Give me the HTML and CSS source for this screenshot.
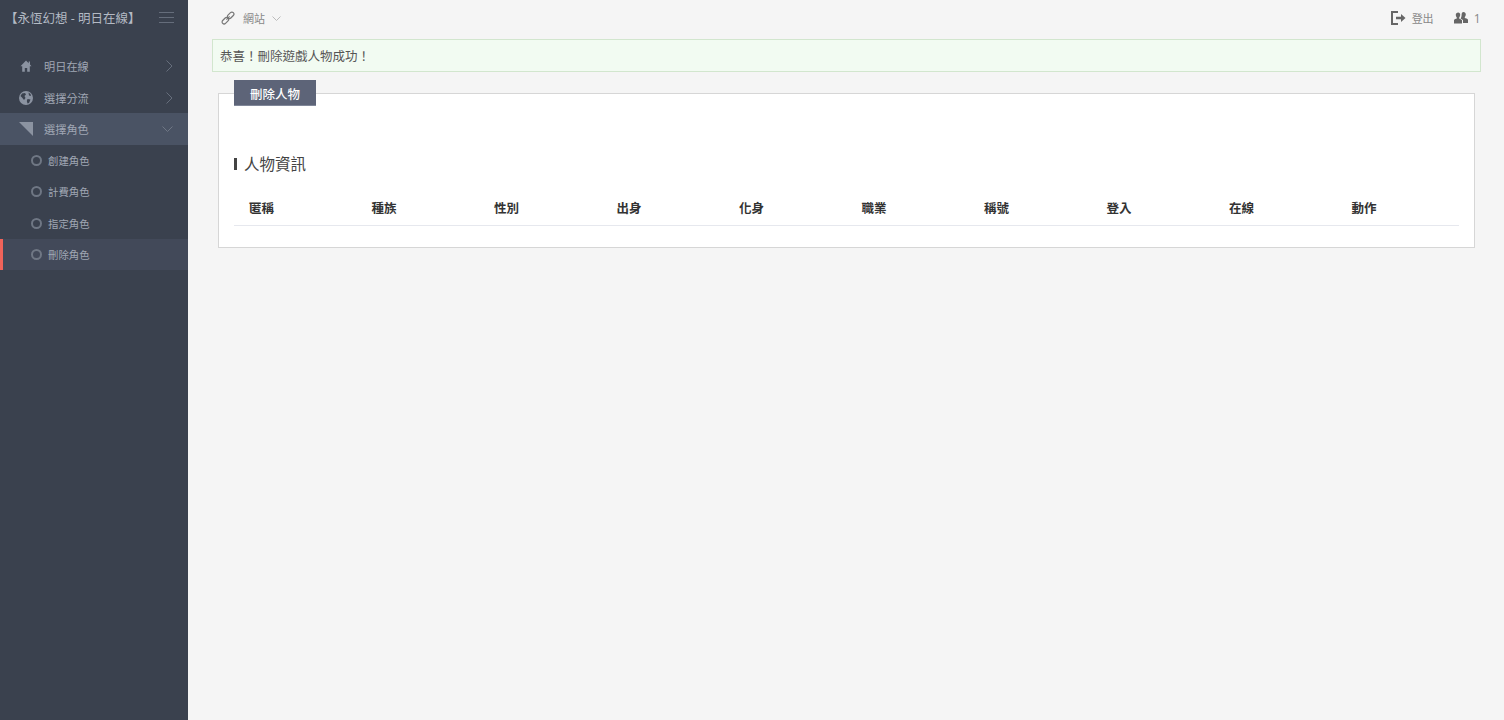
FILE: index.html
```html
<!DOCTYPE html>
<html lang="zh-Hant">
<head>
    <meta charset="UTF-8">
    <meta name="viewport" content="width=device-width, initial-scale=1.0">
    <title>刪除人物</title>
    <link rel="stylesheet" href="styles.css">
</head>
<body>
    <aside class="sidebar">
        <div class="logo">
            <span class="logo-text">【永恆幻想 - 明日在線】</span>
            <svg class="burger" width="15" height="11" viewBox="0 0 15 11"><path d="M0 .5h15M0 5.500h15M0 10.500h15" stroke="#656d7b" fill="none"/></svg>
        </div>
        <nav class="menu">
            <a class="menu-item">
                <svg class="menu-icon" width="14" height="14" viewBox="0 0 14 14"><path d="M7 1.500 1.500 7.200h1.700V12.800h2.600V9h2.400v3.800h2.600V7.200h1.700L11 5.600V2.400H9.700v1.900z" fill="#8b93a1"/></svg>
                <span class="menu-label">明日在線</span>
                <svg class="chev" width="7" height="12" viewBox="0 0 7 12"><path d="m.5.500 5.500 5.500-5.500 5.500" stroke="#666e7c" fill="none"/></svg>
            </a>
            <a class="menu-item">
                <svg class="menu-icon" width="14" height="14" viewBox="0 0 14 14"><circle cx="7" cy="7" r="7" fill="#8b93a1"/><path d="M3 2.500 6 2l1 1.500-1.500 1.500L6.500 7 5 9 3 6.500 1.500 5zM8.500 8l3 .5L10 12 8.500 12.500 7.800 10zM9.500 1.500l2 1.500.5 2-2-.5z" fill="#3a414e"/></svg>
                <span class="menu-label">選擇分流</span>
                <svg class="chev" width="7" height="12" viewBox="0 0 7 12"><path d="m.5.500 5.500 5.500-5.500 5.500" stroke="#666e7c" fill="none"/></svg>
            </a>
            <a class="menu-item open">
                <svg class="menu-icon" width="14" height="14" viewBox="0 0 14 14"><path d="M0 0h14v14z" fill="#8b93a1"/></svg>
                <span class="menu-label">選擇角色</span>
                <svg class="chev-down" width="11" height="6" viewBox="0 0 11 6"><path d="m.5.500 5 5 5-5" stroke="#6f7785" fill="none"/></svg>
            </a>
            <a class="sub-item"><i class="dot"></i>創建角色</a>
            <a class="sub-item"><i class="dot"></i>計費角色</a>
            <a class="sub-item"><i class="dot"></i>指定角色</a>
            <a class="sub-item current"><i class="dot"></i>刪除角色</a>
        </nav>
    </aside>

    <main class="main">
        <header class="topbar">
            <div class="top-left">
                <svg width="14" height="14" viewBox="0 0 14 14" fill="none" stroke="#777" stroke-width="1.2"><g transform="rotate(45 7 7)"><rect x="5" y="-.5" width="4" height="7.500" rx="2"/><rect x="5" y="7" width="4" height="7.500" rx="2"/><path d="M7 4.800v4.400"/></g></svg>
                <span class="top-text">網站</span>
                <svg width="9" height="5" viewBox="0 0 9 5"><path d="m.5.500 4 4 4-4" stroke="#bbb" fill="none"/></svg>
            </div>
            <div class="top-right">
                <svg width="15" height="14" viewBox="0 0 15 14"><path d="M7 1H1v12h6" stroke="#666" stroke-width="2" fill="none"/><path d="M5 5.800h5V3l4.500 4-4.500 4V8.200H5z" fill="#666"/></svg>
                <span class="top-text logout">登出</span>
                <svg width="14" height="14" viewBox="0 0 14 14"><path d="M4.200 1.500c1.300 0 2 1 2 2.200 0 1.200-.5 2.200-1 2.800v1c.8.500 2.300 1 2.800 1.800v3.200H0V9c.4-1 1.900-1.400 2.800-1.600v-1c-.6-.6-1-1.600-1-2.700 0-1.200 1-2.200 2.400-2.200z" fill="#666"/><path d="M9.500 1c1.300 0 2.300 1 2.300 2.300 0 1.200-.5 2.200-1 2.800v.9c.9.300 2.700.7 3.200 1.800V12H9V9.200c-.5-.8-1.500-1.300-2.400-1.800.7-.9 1-2.200 1-3.700 0-1.500.6-2.700 1.900-2.700z" fill="#666"/></svg>
                <span class="top-text count">1</span>
            </div>
        </header>

        <div class="alert">恭喜！刪除遊戲人物成功！</div>

        <fieldset class="panel">
            <legend class="panel-tab">刪除人物</legend>
            <h3 class="section-title">人物資訊</h3>
            <table class="info-table">
                <thead>
                    <tr>
                        <th>匿稱</th>
                        <th>種族</th>
                        <th>性別</th>
                        <th>出身</th>
                        <th>化身</th>
                        <th>職業</th>
                        <th>稱號</th>
                        <th>登入</th>
                        <th>在線</th>
                        <th>動作</th>
                    </tr>
                </thead>
            </table>
        </fieldset>
    </main>
</body>
</html>
```

FILE: styles.css
```css
/* Layout */
* {
    box-sizing: border-box;
}
html, body {
    height: 100%;
}
body {
    margin: 0;
    display: flex;
    min-height: 720px;
    background-color: #f5f5f5;
    color: #333;
    font-family: "Open Sans", "Noto Sans CJK TC", sans-serif;
    font-size: 13px;
    overflow: hidden;
}

/* Sidebar */
.sidebar {
    width: 188px;
    flex-shrink: 0;
    background-color: #3a414e;
    color: #a0a7b4;
}
.logo {
    height: 50.6px;
    padding: 0 14px 15px 5px;
    display: flex;
    align-items: center;
    justify-content: space-between;
}
.logo-text {
    font-size: 12.5px;
    color: #b4bac4;
    white-space: nowrap;
}
.menu-item {
    height: 31.4px;
    padding: 0 15px 0 19px;
    display: flex;
    align-items: center;
    font-size: 11.2px;
}
.menu-item.open {
    background-color: #4a5364;
}
.menu-icon {
    flex-shrink: 0;
}
.menu-label {
    margin-left: 11px;
    flex: 1;
}
.sub-item {
    height: 31.4px;
    padding-left: 31px;
    display: flex;
    align-items: center;
    font-size: 10.4px;
}
.sub-item.current {
    background-color: #424959;
    box-shadow: inset 3px 0 0 #f0635a;
}
.dot {
    width: 11px;
    height: 11px;
    margin-right: 6px;
    border: 2px solid #6f7784;
    border-radius: 50%;
}

/* Main */
.main {
    flex: 1;
    min-width: 0;
    padding: 0 23.5px;
}
.topbar {
    height: 39px;
    padding: 0 0 3px 9.5px;
    display: flex;
    align-items: center;
    justify-content: space-between;
}
.top-left,
.top-right {
    display: flex;
    align-items: center;
}
.top-text {
    margin-left: 8px;
    margin-right: 7px;
    font-size: 11px;
    color: #888;
}
.logout {
    margin-left: 6px;
    margin-right: 20px;
}
.count {
    margin-left: 6px;
    margin-right: 0;
    font-size: 12px;
}
.alert {
    height: 33px;
    padding-left: 7.5px;
    display: flex;
    align-items: center;
    background-color: #f2fbf2;
    border: 1px solid #d2e6ce;
    color: #555;
    font-size: 12.5px;
}
.panel {
    margin: 8px 5.5px 0 6.5px;
    padding: 0 15px 21px;
    min-width: 0;
    height: 168px;
    background-color: #fff;
    border: 1px solid #d6d6d6;
}
.panel-tab {
    height: 26px;
    margin: 0;
    padding: 2px 16px 0;
    display: flex;
    align-items: center;
    background-color: #5d6478;
    border-bottom: 1px solid #808799;
    color: #fff;
    font-size: 12.5px;
    font-weight: 500;
}
.section-title {
    margin: 51.5px 0 0;
    padding-left: 7px;
    border-left: 3px solid #444;
    height: 12px;
    display: flex;
    align-items: center;
    font-size: 15.5px;
    font-weight: 400;
    color: #444;
}
.info-table {
    width: 100%;
    margin-top: 21px;
    border-collapse: collapse;
    table-layout: fixed;
}
.info-table th {
    height: 35px;
    padding: 0 15px;
    text-align: left;
    font-size: 12.5px;
    font-weight: 700;
    color: #333;
    border-bottom: 1px solid #e6e8ee;
}
```
